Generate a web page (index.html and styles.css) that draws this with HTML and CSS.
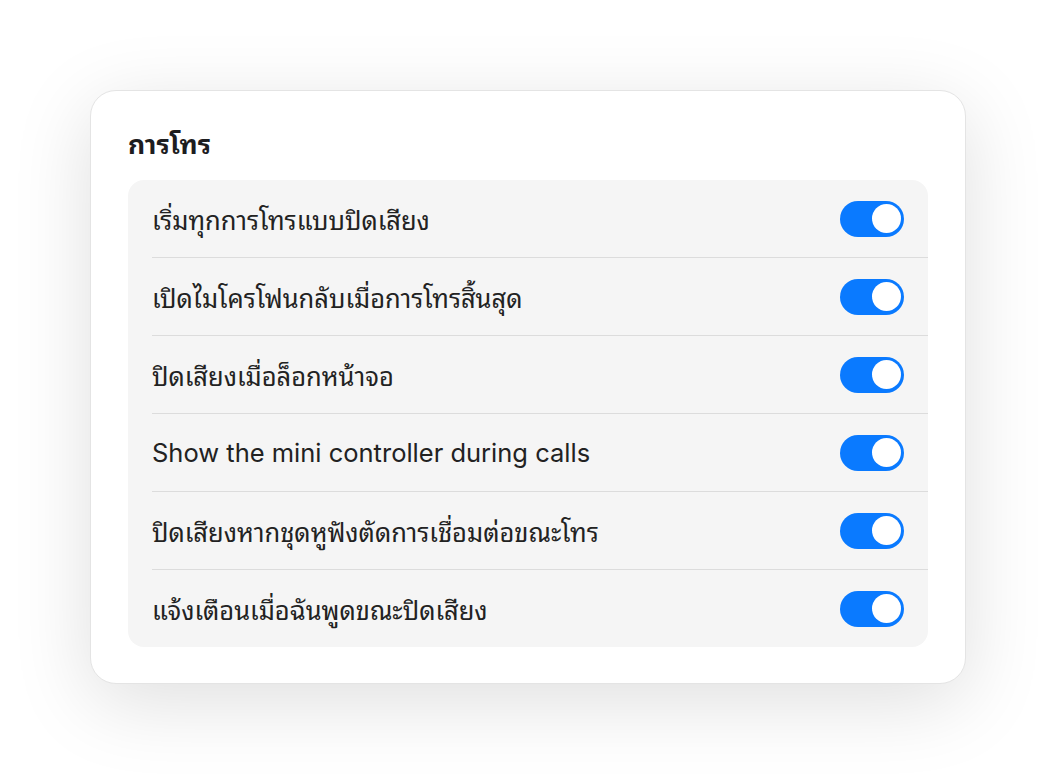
FILE: index.html
```html
<!DOCTYPE html>
<html lang="th">
<head>
<meta charset="utf-8">
<link rel="stylesheet" href="styles.css">
</head>
<body>
<div class="card">
  <h2 class="title">การโทร</h2>
  <div class="group">
    <div class="row"><span class="label">เริ่มทุกการโทรแบบปิดเสียง</span><span class="toggle"><span class="knob"></span></span></div>
    <div class="row"><span class="label">เปิดไมโครโฟนกลับเมื่อการโทรสิ้นสุด</span><span class="toggle"><span class="knob"></span></span></div>
    <div class="row"><span class="label">ปิดเสียงเมื่อล็อกหน้าจอ</span><span class="toggle"><span class="knob"></span></span></div>
    <div class="row"><span class="label">Show the mini controller during calls</span><span class="toggle"><span class="knob"></span></span></div>
    <div class="row"><span class="label">ปิดเสียงหากชุดหูฟังตัดการเชื่อมต่อขณะโทร</span><span class="toggle"><span class="knob"></span></span></div>
    <div class="row"><span class="label">แจ้งเตือนเมื่อฉันพูดขณะปิดเสียง</span><span class="toggle"><span class="knob"></span></span></div>
  </div>
</div>
</body>
</html>
```
FILE: styles.css
```css
html, body {
  margin: 0;
  padding: 0;
  background: #ffffff;
  min-height: 774px;
}
body {
  box-sizing: border-box;
  padding: 90px 90px 0 90px;
  font-family: Inter, "Noto Sans Thai Looped", "Noto Sans Thai", "Liberation Sans", sans-serif;
  color: #1d1d1f;
}
.card {
  width: 800px;
  background: #fff;
  border: 1px solid #e4e4e4;
  border-radius: 26px;
  padding: 37px 37px 36px 37px;
  box-shadow: 0 18px 80px rgba(0, 0, 0, 0.13);
}
.title {
  margin: 0 0 20px 0;
  font-size: 26.5px;
  font-weight: 700;
  line-height: 32px;
  color: #1d1d1f;
}
.group {
  background: #f5f5f5;
  border-radius: 16px;
  padding-left: 24px;
}
.row {
  display: flex;
  align-items: center;
  justify-content: space-between;
  height: 77px;
  padding-right: 24px;
  border-top: 1px solid #dcdcdc;
}
.row:first-child {
  border-top: none;
}
.label {
  font-size: 25.5px;
  color: #222;
}
.toggle {
  width: 64px;
  height: 36px;
  border-radius: 18px;
  background: #0a7aff;
  display: flex;
  align-items: center;
  justify-content: flex-end;
  padding: 0 3px;
  box-sizing: border-box;
}
.knob {
  width: 29px;
  height: 29px;
  border-radius: 50%;
  background: #fff;
}
```
